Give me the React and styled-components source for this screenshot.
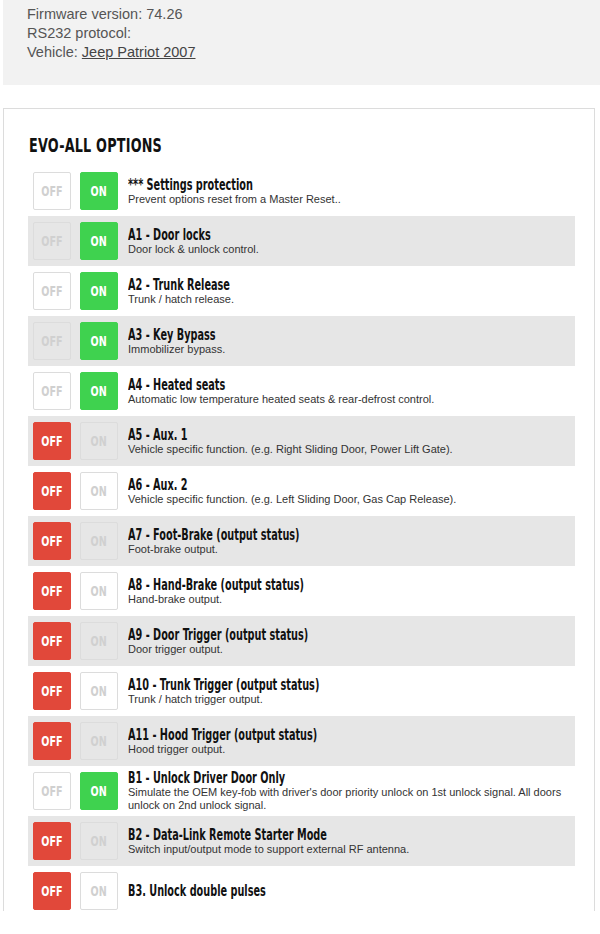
import styled, { createGlobalStyle } from 'styled-components';

const GlobalStyle = createGlobalStyle`
	html, body {
		margin: 0;
		padding: 0;
		background: #ffffff;
	}

	body {
		font-family: "Liberation Sans", Arial, sans-serif;
		color: #333333;
	}
`;

const Page = styled.div`
	display: flex;
	flex-direction: column;
	padding-left: 3px;
	width: 597px;
`;

const InfoPanel = styled.div`
	background: #f2f2f2;
	padding: 5px 24px 13px;
	font-size: 14.5px;
	line-height: 19px;
	color: #555555;
	height: 67px;
`;

const VehicleLink = styled.a`
	color: #444444;
	text-decoration: underline;
`;

const OptionsCard = styled.div`
	margin-top: 23px;
	width: 592px;
	box-sizing: border-box;
	border: 1px solid #dcdcdc;
	border-bottom: none;
	padding: 0 19px 0 24px;
	height: 803px;
	overflow: hidden;
`;

// the page uses a narrow display face; squeeze DejaVu Condensed to match
const Narrow = styled.span`
	display: inline-block;
	white-space: nowrap;
	transform: scaleX(${({ $scale }) => $scale || 0.75});
	transform-origin: ${({ $center }) => ($center ? 'center' : 'left center')};
`;

const CardTitle = styled.h2`
	margin: 0;
	padding: 24px 0 0 1px;
	height: 33px;
	font-family: "DejaVu Sans Condensed", "DejaVu Sans", sans-serif;
	font-stretch: condensed;
	font-weight: bold;
	font-size: 20px;
	line-height: 24px;
	color: #111111;
	letter-spacing: 0.3px;
`;

const OptionRow = styled.div`
	display: flex;
	align-items: center;
	height: 50px;
	padding: 0 5px;
	background: ${({ $shaded }) => ($shaded ? '#e6e6e6' : 'transparent')};
`;

const Toggles = styled.div`
	display: flex;
	gap: 9px;
	flex-shrink: 0;
	margin-right: 10px;
`;

const ToggleBtn = styled.div`
	width: 38px;
	height: 38px;
	box-sizing: border-box;
	border-radius: 2px;
	display: flex;
	align-items: center;
	justify-content: center;
	font-family: "DejaVu Sans Condensed", "DejaVu Sans", sans-serif;
	font-stretch: condensed;
	font-weight: bold;
	font-size: 14px;
	border: 1px solid ${({ $active, $kind }) => ($active ? ($kind === 'on' ? '#3fd24f' : '#e1483a') : '#dcdcdc')};
	background: ${({ $active, $kind, $shaded }) =>
		$active ? ($kind === 'on' ? '#3fd24f' : '#e1483a') : $shaded ? 'transparent' : '#ffffff'};
	color: ${({ $active }) => ($active ? '#ffffff' : '#d0d0d0')};
`;

const OptionText = styled.div`
	display: flex;
	flex-direction: column;
	min-width: 0;
`;

const OptionTitle = styled.div`
	font-family: "DejaVu Sans Condensed", "DejaVu Sans", sans-serif;
	font-stretch: condensed;
	font-weight: bold;
	font-size: 15px;
	line-height: 16px;
	color: #111111;
`;

const OptionDesc = styled.div`
	font-size: 11px;
	line-height: 13px;
	color: #333333;
	padding-right: 4px;
`;

const options = [
	{ title: '*** Settings protection', desc: 'Prevent options reset from a Master Reset..', on: true },
	{ title: 'A1 - Door locks', desc: 'Door lock & unlock control.', on: true },
	{ title: 'A2 - Trunk Release', desc: 'Trunk / hatch release.', on: true },
	{ title: 'A3 - Key Bypass', desc: 'Immobilizer bypass.', on: true },
	{ title: 'A4 - Heated seats', desc: 'Automatic low temperature heated seats & rear-defrost control.', on: true },
	{ title: 'A5 - Aux. 1', desc: 'Vehicle specific function. (e.g. Right Sliding Door, Power Lift Gate).', on: false },
	{ title: 'A6 - Aux. 2', desc: 'Vehicle specific function. (e.g. Left Sliding Door, Gas Cap Release).', on: false },
	{ title: 'A7 - Foot-Brake (output status)', desc: 'Foot-brake output.', on: false },
	{ title: 'A8 - Hand-Brake (output status)', desc: 'Hand-brake output.', on: false },
	{ title: 'A9 - Door Trigger (output status)', desc: 'Door trigger output.', on: false },
	{ title: 'A10 - Trunk Trigger (output status)', desc: 'Trunk / hatch trigger output.', on: false },
	{ title: 'A11 - Hood Trigger (output status)', desc: 'Hood trigger output.', on: false },
	{
		title: 'B1 - Unlock Driver Door Only',
		desc: "Simulate the OEM key-fob with driver's door priority unlock on 1st unlock signal. All doors unlock on 2nd unlock signal.",
		on: true,
	},
	{ title: 'B2 - Data-Link Remote Starter Mode', desc: 'Switch input/output mode to support external RF antenna.', on: false },
	{ title: 'B3. Unlock double pulses', desc: '', on: false },
];

const App = () => {
	return (
		<>
			<GlobalStyle />
			<Page>
				<InfoPanel>
					<div>Firmware version: 74.26</div>
					<div>RS232 protocol:</div>
					<div>
						Vehicle: <VehicleLink href="#">Jeep Patriot 2007</VehicleLink>
					</div>
				</InfoPanel>
				<OptionsCard>
					<CardTitle>
						<Narrow $scale={0.71}>EVO-ALL OPTIONS</Narrow>
					</CardTitle>
					{options.map((opt, i) => {
						const shaded = i % 2 === 1;
						return (
							<OptionRow key={opt.title} $shaded={shaded}>
								<Toggles>
									<ToggleBtn $kind="off" $active={!opt.on} $shaded={shaded}>
										<Narrow $scale={0.76} $center>OFF</Narrow>
									</ToggleBtn>
									<ToggleBtn $kind="on" $active={opt.on} $shaded={shaded}>
										<Narrow $scale={0.76} $center>ON</Narrow>
									</ToggleBtn>
								</Toggles>
								<OptionText>
									<OptionTitle>
										<Narrow $scale={0.72}>{opt.title}</Narrow>
									</OptionTitle>
									{opt.desc && <OptionDesc>{opt.desc}</OptionDesc>}
								</OptionText>
							</OptionRow>
						);
					})}
				</OptionsCard>
			</Page>
		</>
	);
};

export default App;
